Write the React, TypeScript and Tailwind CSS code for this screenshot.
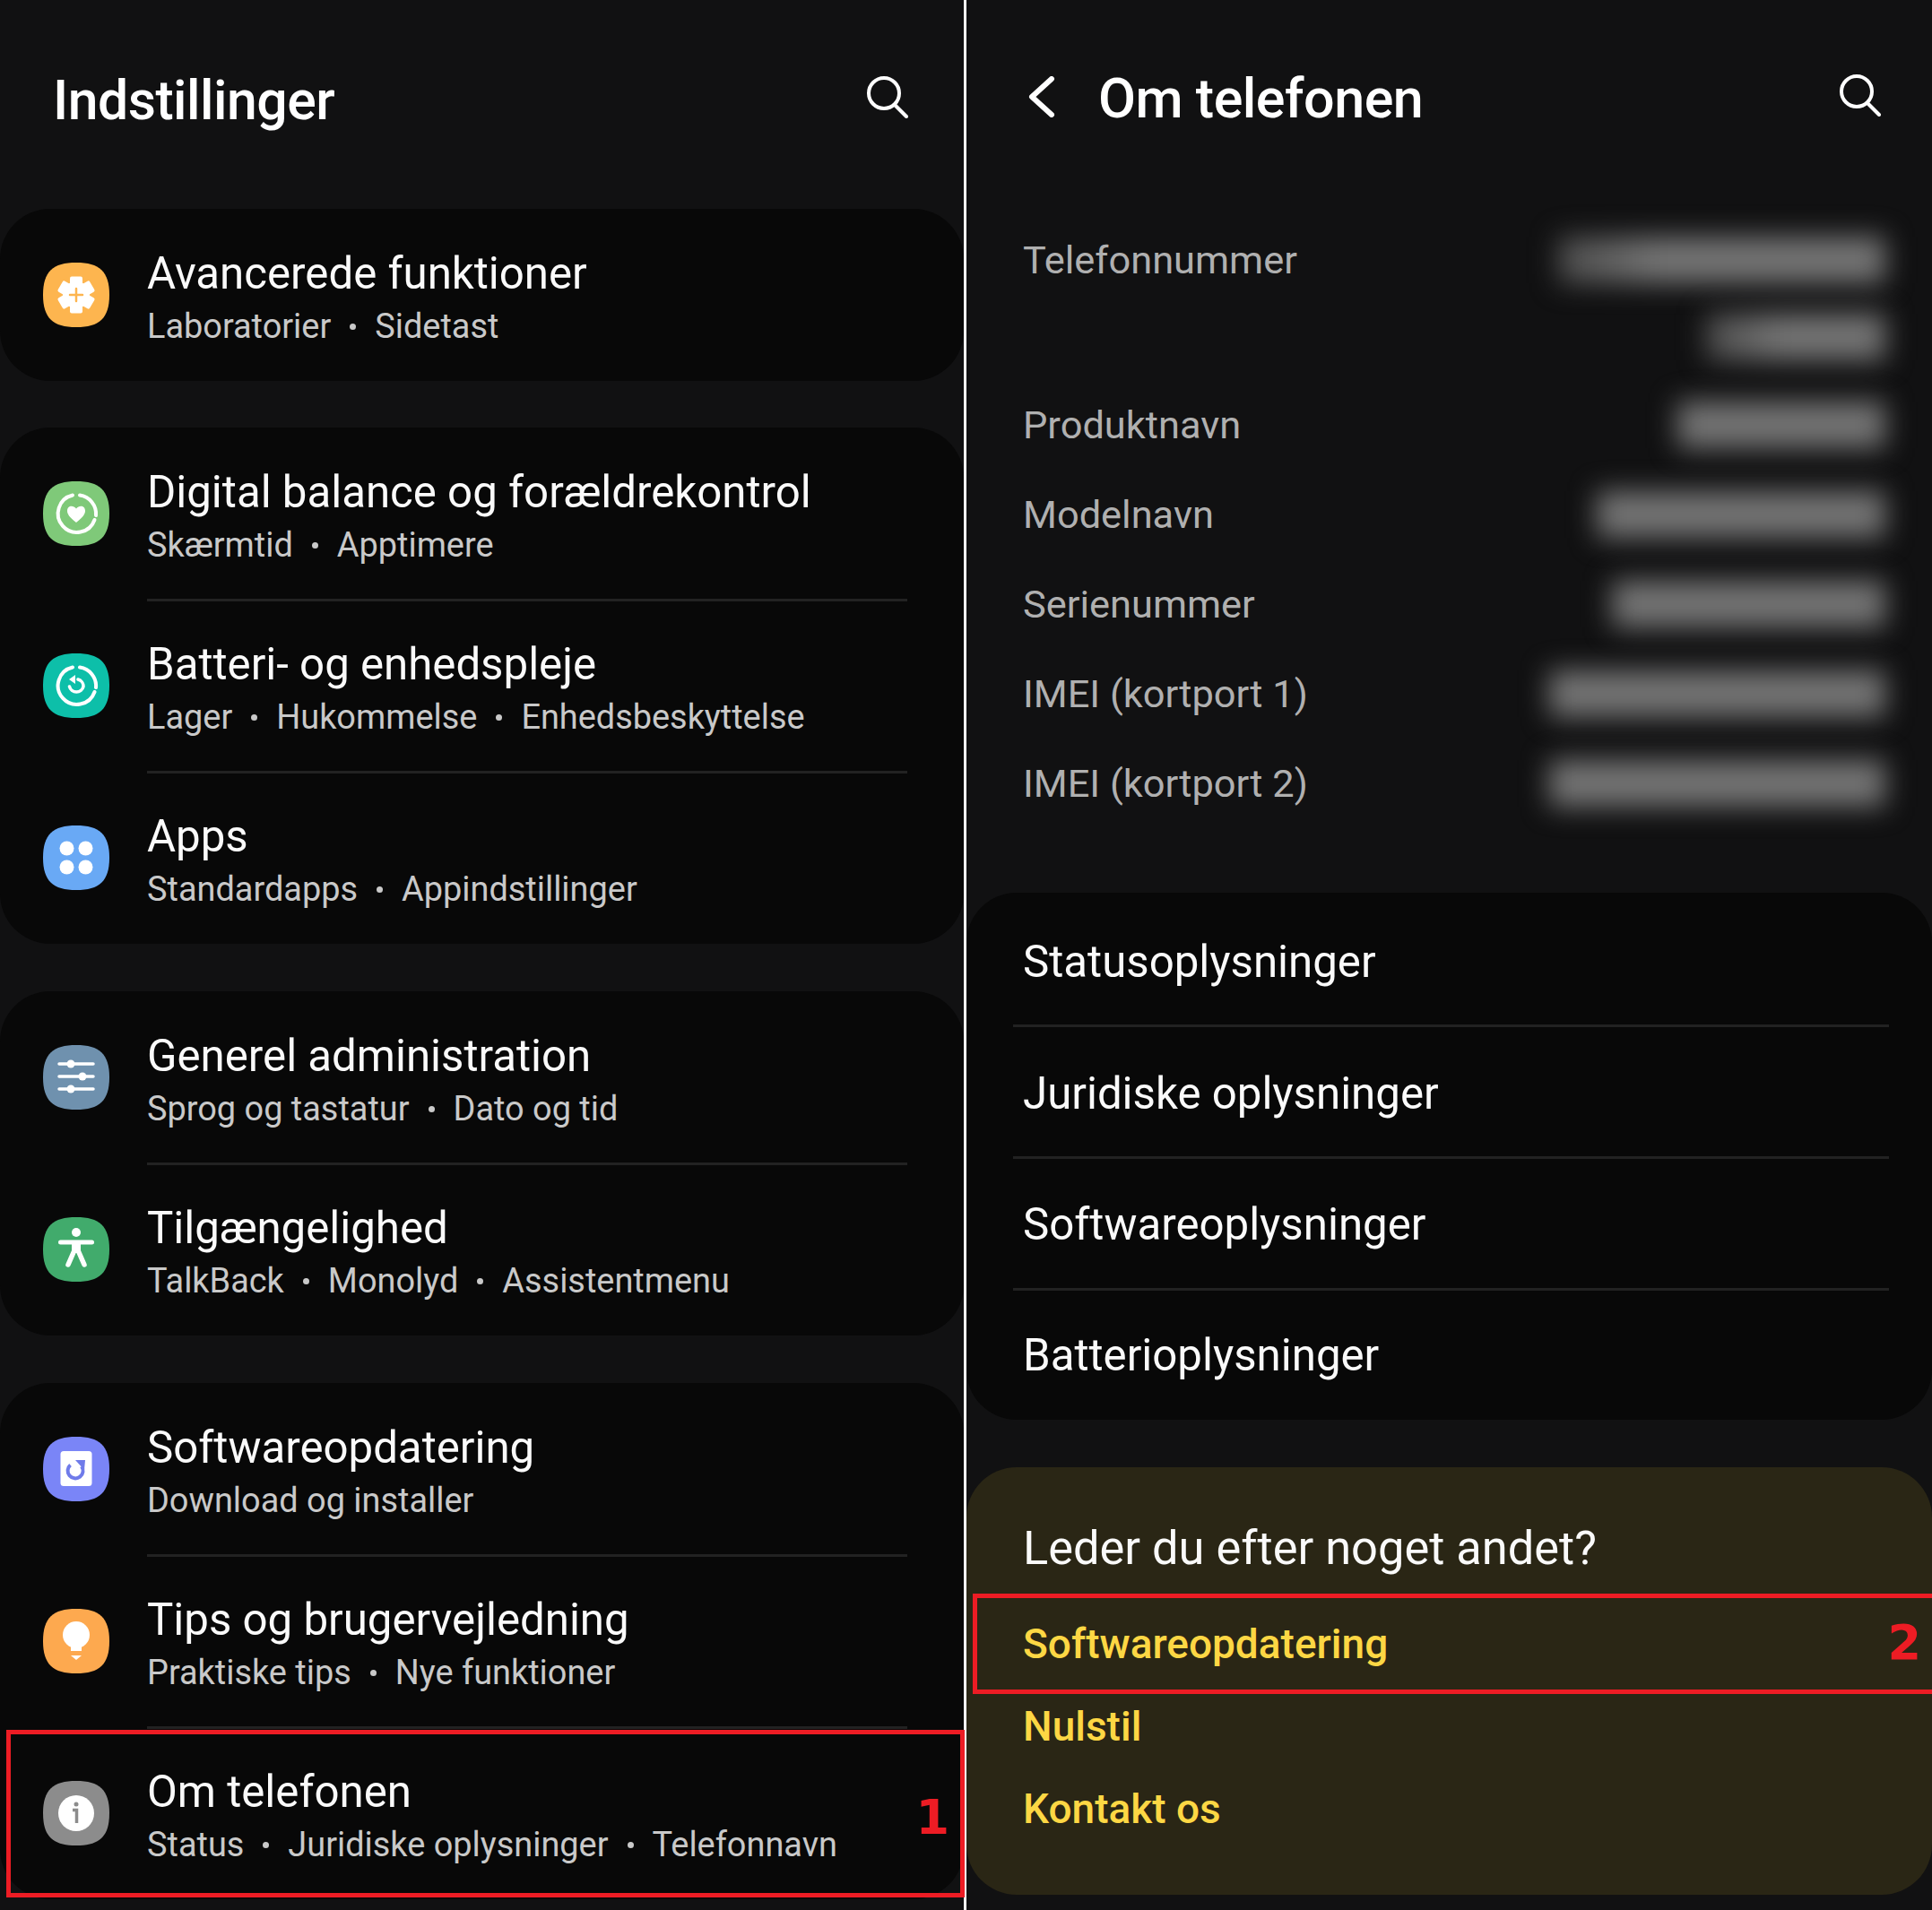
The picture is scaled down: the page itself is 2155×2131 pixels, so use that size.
import type { ReactNode } from 'react';

function Squircle({ color, children }: { color: string; children: ReactNode }) {
  return (
    <svg viewBox="0 0 74 72" className="h-[72px] w-[74px] shrink-0">
      <path d="M37 0C63 0 74 10 74 36C74 62 63 72 37 72C11 72 0 62 0 36C0 10 11 0 37 0Z" fill={color} />
      {children}
    </svg>
  );
}

const icons = {
  gear: (
    <Squircle color="#fdb54f">
      <g fill="#fff" transform="translate(37 36)">
        <circle r="15" />
        <rect x="-7" y="-20.500" width="14" height="41" rx="2" />
        <rect x="-7" y="-20.500" width="14" height="41" rx="2" transform="rotate(60)" />
        <rect x="-7" y="-20.500" width="14" height="41" rx="2" transform="rotate(120)" />
      </g>
      <path d="M37 29V43M30 36H44" stroke="#fdb54f" strokeWidth="2.500" strokeLinecap="round" />
    </Squircle>
  ),
  balance: (
    <Squircle color="#7fc979">
      <path d="M33 15.500A21 21 0 1 0 57.500 43" fill="none" stroke="#fff" strokeWidth="4" strokeLinecap="round" />
      <path d="M41 15.500A21 21 0 0 1 59 38" fill="none" stroke="#fff" strokeWidth="4" strokeLinecap="round" />
      <path d="M37 46C29 40 27 36 27 33C27 27 33.500 26 37 30.500C40.500 26 47 27 47 33C47 36 45 40 37 46Z" fill="#fff" />
    </Squircle>
  ),
  battery: (
    <Squircle color="#0dbfa9">
      <path d="M33 15.500A21 21 0 1 0 57.500 43" fill="none" stroke="#fff" strokeWidth="4" strokeLinecap="round" />
      <path d="M41 15.500A21 21 0 0 1 59 38" fill="none" stroke="#fff" strokeWidth="4" strokeLinecap="round" />
      <path d="M29.500 37A8 8 0 0 0 45 37A8 8 0 0 0 39 29" fill="none" stroke="#fff" strokeWidth="3.500" strokeLinecap="round" />
      <path d="M36 24V34L29 29Z" fill="#fff" />
    </Squircle>
  ),
  apps: (
    <Squircle color="#69a9f5">
      <circle cx="26.500" cy="25.500" r="8" fill="#fff" />
      <circle cx="47.500" cy="25.500" r="8" fill="#fff" />
      <circle cx="26.500" cy="46.500" r="8" fill="#fff" />
      <circle cx="47.500" cy="46.500" r="8" fill="#fff" />
    </Squircle>
  ),
  sliders: (
    <Squircle color="#6f91ae">
      <path d="M18 21H56M18 35H56M18 49H56" stroke="#fff" strokeWidth="3.500" strokeLinecap="round" />
      <circle cx="31" cy="21" r="4.500" fill="#fff" />
      <circle cx="44" cy="35" r="4.500" fill="#fff" />
      <circle cx="31" cy="49" r="4.500" fill="#fff" />
    </Squircle>
  ),
  access: (
    <Squircle color="#41ab6c">
      <circle cx="37" cy="17" r="5" fill="#fff" />
      <path d="M19.500 28H54.500" stroke="#fff" strokeWidth="5" strokeLinecap="round" />
      <path d="M32 28H42V40H32Z" fill="#fff" />
      <path d="M35 37L28 53M39 37L46 53" stroke="#fff" strokeWidth="5.500" strokeLinecap="round" />
    </Squircle>
  ),
  update: (
    <Squircle color="#7a85f7">
      <rect x="19.500" y="16" width="35" height="39" rx="3.500" fill="#fff" />
      <path d="M30.500 31.500A8.500 8.500 0 1 0 43 33" fill="none" stroke="#6f7bea" strokeWidth="4" />
      <path d="M36 26H47L46 37Z" fill="#6f7bea" />
    </Squircle>
  ),
  tips: (
    <Squircle color="#fda94f">
      <circle cx="37" cy="29" r="15" fill="#fff" />
      <path d="M31 36H43V47H31Z" fill="#fff" />
      <path d="M31 52H43L37 57Z" fill="#fff" />
    </Squircle>
  ),
  info: (
    <Squircle color="#8c8c8c">
      <circle cx="37" cy="36" r="20" fill="#fff" />
      <circle cx="37" cy="26" r="2.500" fill="#8c8c8c" />
      <path d="M33 32.500H37.500V47" fill="none" stroke="#8c8c8c" strokeWidth="3.500" />
    </Squircle>
  ),
};

function SearchIcon() {
  return (
    <svg viewBox="0 0 48 48" className="h-12 w-12" fill="none" stroke="#fff" strokeWidth="4" strokeLinecap="round">
      <circle cx="21" cy="20" r="17" />
      <path d="M33 33L46 46" />
    </svg>
  );
}

type RowProps = { icon: ReactNode; title: string; sub: string[]; last?: boolean; children?: ReactNode };

function SettingRow({ icon, title, sub, last, children }: RowProps) {
  return (
    <div className="relative flex h-[192px] items-center gap-[42px] pl-12">
      {icon}
      <div className={`mr-[63px] h-[194px] flex-1 self-start pt-[41px] ${last ? '' : 'border-b-[3px] border-[#222]'}`}>
        <div className="text-[49.200px] leading-[62px] text-[#fafafa]">{title}</div>
        <div className="flex gap-[21px] text-[37.900px] leading-[56px] text-[#c9c9c9]">
          {sub.map((s, i) => (
            <span key={s} className="flex items-center gap-[21px]">
              {i > 0 && <span className="h-[7px] w-[7px] rounded-full bg-[#c9c9c9]" />}
              {s}
            </span>
          ))}
        </div>
      </div>
      {children}
    </div>
  );
}

const phoneInfo = [
  { label: 'Produktnavn', bars: 'ml-auto w-[232px]' },
  { label: 'Modelnavn', bars: 'ml-auto w-[322px]' },
  { label: 'Serienummer', bars: 'ml-auto w-[305px]' },
  { label: 'IMEI (kortport 1)', bars: 'ml-auto w-[375px]' },
  { label: 'IMEI (kortport 2)', bars: 'ml-auto w-[375px]' },
];

const infoLinks = [
  { label: 'Statusoplysninger', row: 'h-[150px] border-b-[3px] border-[#222] pt-[9px]' },
  { label: 'Juridiske oplysninger', row: 'h-[147px] border-b-[3px] border-[#222] pt-[6px]' },
  { label: 'Softwareoplysninger', row: 'h-[147px] border-b-[3px] border-[#222] pt-[4px]' },
  { label: 'Batterioplysninger', row: 'h-[144px] pt-[2px]' },
];

export default function App() {
  return (
    <div className="flex h-[2131px] w-[2155px] overflow-hidden bg-white font-['Roboto',sans-serif]">
      <div id="left" className="w-[1075px] shrink-0 bg-[#111112]">
        <div className="flex h-[233px] items-start justify-between pl-[59px] pr-[62px] pt-[78px]">
          <h1 className="text-[60.700px] font-medium leading-[70px] tracking-[-0.5px] text-white">Indstillinger</h1>
          <div className="mt-[6px]">
            <SearchIcon />
          </div>
        </div>

        <div className="flex flex-col gap-[53px]">
          <div className="-mb-px rounded-[56px] bg-[#080808]">
            <SettingRow icon={icons.gear} title="Avancerede funktioner" sub={['Laboratorier', 'Sidetast']} last />
          </div>
          <div className="rounded-[56px] bg-[#080808]">
            <SettingRow icon={icons.balance} title="Digital balance og forældrekontrol" sub={['Skærmtid', 'Apptimere']} />
            <SettingRow icon={icons.battery} title="Batteri- og enhedspleje" sub={['Lager', 'Hukommelse', 'Enhedsbeskyttelse']} />
            <SettingRow icon={icons.apps} title="Apps" sub={['Standardapps', 'Appindstillinger']} last />
          </div>
          <div className="rounded-[56px] bg-[#080808]">
            <SettingRow icon={icons.sliders} title="Generel administration" sub={['Sprog og tastatur', 'Dato og tid']} />
            <SettingRow icon={icons.access} title="Tilgængelighed" sub={['TalkBack', 'Monolyd', 'Assistentmenu']} last />
          </div>
          <div className="rounded-[56px] bg-[#080808]">
            <SettingRow icon={icons.update} title="Softwareopdatering" sub={['Download og installer']} />
            <SettingRow icon={icons.tips} title="Tips og brugervejledning" sub={['Praktiske tips', 'Nye funktioner']} />
            <SettingRow icon={icons.info} title="Om telefonen" sub={['Status', 'Juridiske oplysninger', 'Telefonnavn']} last>
              <div className="absolute bottom-[2px] left-[7px] right-[-1px] top-[3px] flex items-center justify-end border-[5px] border-[#ed1c24] pr-[12px] pt-[8px]">
                <span className="font-['DejaVu_Sans',sans-serif] text-[54px] font-bold text-[#ed1c24]">1</span>
              </div>
            </SettingRow>
          </div>
        </div>
      </div>

      <div id="right" className="ml-[3px] flex-1 bg-[#111112]">
        <div className="flex h-[216px] items-start pt-[75px] pr-[57px]">
          <svg viewBox="0 0 32 46" className="ml-[68px] mt-[10px] h-[46px] w-8" fill="none" stroke="#fff" strokeWidth="6" strokeLinecap="round" strokeLinejoin="round">
            <path d="M27 3L5 23L27 43" />
          </svg>
          <h1 className="ml-[47px] flex-1 text-[61px] font-medium leading-[70px] tracking-[-0.5px] text-white">Om telefonen</h1>
          <div className="mt-[7px]">
            <SearchIcon />
          </div>
        </div>

        <div className="pl-[63px] pr-[52px] text-[43.400px] text-[#b0b0b0]">
          <div className="flex h-[208px] items-start pt-[42px]">
            <span className="mt-[8px] leading-[50px]">Telefonnummer</span>
            <div className="ml-auto flex w-[365px] flex-col items-end gap-[34px] pt-[6px]">
              <div className="h-[52px] w-full bg-linear-to-r from-[#4c4c4c] via-[#747474] via-30% to-[#747474] blur-[15px]" />
              <div className="h-[52px] w-[200px] bg-linear-to-r from-[#4c4c4c] via-[#747474] via-40% to-[#747474] blur-[15px]" />
            </div>
          </div>
          {phoneInfo.map((r) => (
            <div key={r.label} className="flex h-[100px] items-center">
              <span className="mt-px leading-[50px]">{r.label}</span>
              <div className={`h-[52px] bg-[#747474] blur-[15px] ${r.bars}`} />
            </div>
          ))}
        </div>

        <div className="mt-[72px] rounded-[56px] bg-[#080808] text-[49.200px] text-[#fafafa]">
          {infoLinks.map((l) => (
            <div key={l.label} className={`ml-[52px] mr-[48px] flex items-center pl-[11px] ${l.row}`}>
              {l.label}
            </div>
          ))}
        </div>

        <div className="mt-[53px] h-[477px] rounded-[56px] bg-[#2a2615] pt-[57px]">
          <div className="pl-[63px] text-[52.400px] leading-[66px] text-[#fafafa]">Leder du efter noget andet?</div>
          <div className="relative ml-[7px] mt-[18px] flex h-[112px] items-center justify-between border-[5px] border-r-0 border-[#ed1c24] pl-[51px] pr-[12px] text-[46px] font-medium text-[#fdd744]">
            <span>Softwareopdatering</span>
            <span className="mb-[3px] font-['DejaVu_Sans',sans-serif] text-[54px] font-bold text-[#ed1c24]">2</span>
          </div>
          <div className="flex h-[72px] items-center pl-[63px] text-[46px] font-medium text-[#fdd744]">Nulstil</div>
          <div className="mt-[20px] flex h-[72px] items-center pl-[63px] text-[46px] font-medium text-[#fdd744]">Kontakt os</div>
        </div>
      </div>
    </div>
  );
}
